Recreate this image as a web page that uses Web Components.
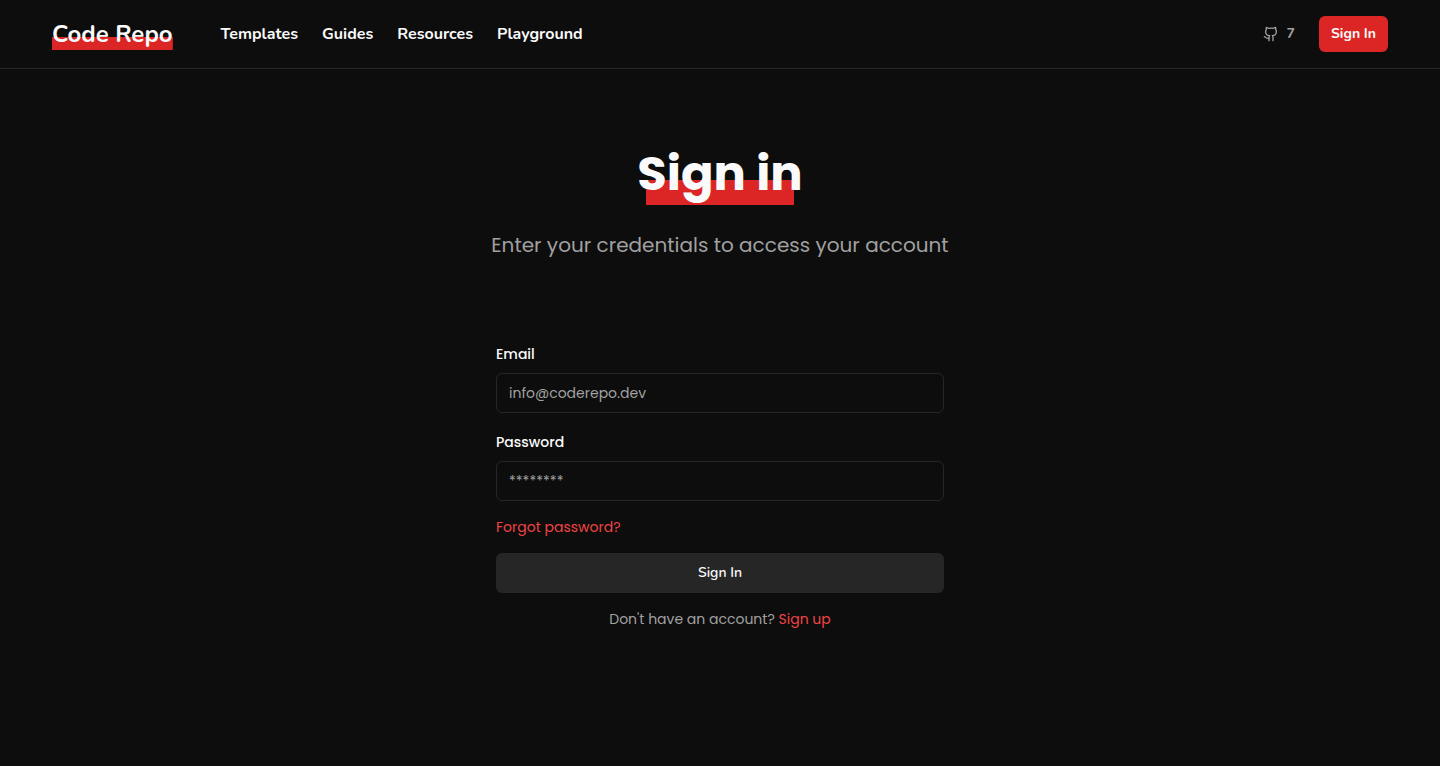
<!DOCTYPE html>
<html lang="en">
<head>
<meta charset="utf-8">
<meta name="viewport" content="width=device-width, initial-scale=1">
<title>Sign in - Code Repo</title>
<style>
  :root {
    --background: #0d0d0d;
    --foreground: #fafafa;
    --muted: #a1a1a1;
    --line: #262626;
    --red: #dc2626;
    --red-text: #ef4444;
    --brand-font: Nunito, "Open Sans", sans-serif;
    --body-font: Poppins, Inter, sans-serif;
  }
  body {
    margin: 0;
    background: var(--background);
    color: var(--foreground);
    font: 14px/20px var(--body-font);
  }
</style>
</head>
<body>
<sign-in-page></sign-in-page>

<script>
class BaseElement extends HTMLElement {
  constructor() {
    super();
    this.attachShadow({ mode: "open" }).innerHTML = this.render();
  }
}

customElements.define("site-logo", class extends BaseElement {
  render() {
    return `
      <style>
        :host { display: block; }
        a {
          display: block;
          font: 700 24px/32px var(--brand-font);
          color: inherit;
          text-decoration: none;
          white-space: nowrap;
          background: linear-gradient(var(--red), var(--red)) bottom / 100% 13px no-repeat;
        }
      </style>
      <a href="#"><slot></slot></a>`;
  }
});

customElements.define("nav-link", class extends BaseElement {
  render() {
    return `
      <style>
        :host { display: block; }
        a {
          display: block;
          font: 700 16px/24px var(--brand-font);
          color: inherit;
          text-decoration: none;
        }
      </style>
      <a href="#"><slot></slot></a>`;
  }
});

customElements.define("star-count", class extends BaseElement {
  render() {
    return `
      <style>
        :host { display: block; }
        a {
          display: flex;
          align-items: center;
          gap: 8px;
          color: var(--muted);
          font: 700 14px/20px var(--brand-font);
          text-decoration: none;
        }
        svg { display: block; width: 16px; height: 16px; }
      </style>
      <a href="#" aria-label="GitHub stars">
        <svg viewBox="0 0 24 24" fill="none" stroke="currentColor" stroke-width="2" stroke-linecap="round" stroke-linejoin="round" aria-hidden="true">
          <path d="M15 22v-4a4.8 4.8 0 0 0-1-3.5c3 0 6-2 6-5.5.08-1.25-.27-2.48-1-3.5.28-1.15.28-2.35 0-3.5 0 0-1 0-3 1.5-2.64-.5-5.36-.5-8 0C6 2 5 2 5 2c-.3 1.15-.3 2.35 0 3.5A5.403 5.403 0 0 0 4 9c0 3.5 3 5.5 6 5.5-.39.49-.68 1.05-.85 1.65-.17.6-.22 1.23-.15 1.85v4"/>
          <path d="M9 18c-4.51 2-5-2-7-2"/>
        </svg>
        <slot></slot>
      </a>`;
  }
});

customElements.define("site-header", class extends BaseElement {
  render() {
    return `
      <style>
        :host { display: block; border-bottom: 1px solid var(--line); }
        header {
          display: flex;
          align-items: center;
          max-width: 1336px;
          margin: 0 auto;
          padding: 16px 24px;
        }
        nav { display: flex; gap: 24px; margin-left: 48px; }
        .actions { display: flex; align-items: center; gap: 24px; margin-left: auto; }
        button {
          height: 36px;
          padding: 0 12px;
          border: 0;
          border-radius: 6px;
          background: var(--red);
          color: var(--foreground);
          font: 700 14px/20px var(--brand-font);
          cursor: pointer;
        }
      </style>
      <header>
        <site-logo>Code Repo</site-logo>
        <nav>
          <nav-link>Templates</nav-link>
          <nav-link>Guides</nav-link>
          <nav-link>Resources</nav-link>
          <nav-link>Playground</nav-link>
        </nav>
        <div class="actions">
          <star-count>7</star-count>
          <button type="button">Sign In</button>
        </div>
      </header>`;
  }
});

customElements.define("page-heading", class extends BaseElement {
  render() {
    return `
      <style>
        :host { display: flex; flex-direction: column; align-items: center; gap: 24px; text-align: center; }
        h1 {
          margin: 0;
          padding-bottom: 2px;
          font: 700 48px/58px var(--body-font);
          background: linear-gradient(var(--red), var(--red)) bottom / 148px 25px no-repeat;
        }
        p { margin: 0; font-size: 20px; line-height: 32px; color: var(--muted); }
      </style>
      <h1><slot name="title"></slot></h1>
      <p><slot></slot></p>`;
  }
});

customElements.define("text-field", class extends BaseElement {
  render() {
    return `
      <style>
        :host { display: grid; gap: 9px; }
        label { font-weight: 500; line-height: 20px; }
        input {
          box-sizing: border-box;
          width: 100%;
          height: 40px;
          padding: 0 12px;
          border: 1px solid var(--line);
          border-radius: 6px;
          background: transparent;
          color: var(--foreground);
          font: 14px/20px var(--body-font);
        }
        input::placeholder { color: var(--muted); opacity: 1; }
      </style>
      <label for="field">${this.getAttribute("label")}</label>
      <input id="field" type="${this.getAttribute("type")}" placeholder="${this.getAttribute("placeholder")}">`;
  }
});

customElements.define("sign-in-form", class extends BaseElement {
  render() {
    return `
      <style>
        :host { display: block; width: 100%; max-width: 448px; }
        form { display: grid; gap: 16px; }
        .fields { display: grid; gap: 19px; }
        a { color: var(--red-text); text-decoration: none; }
        .forgot { justify-self: start; }
        button {
          height: 40px;
          border: 0;
          border-radius: 6px;
          background: var(--line);
          color: var(--foreground);
          font: 600 14px/20px var(--brand-font);
          cursor: pointer;
        }
        p { margin: 0; text-align: center; color: var(--muted); }
      </style>
      <form>
        <div class="fields">
          <text-field label="Email" type="email" placeholder="info@coderepo.dev"></text-field>
          <text-field label="Password" type="password" placeholder="********"></text-field>
        </div>
        <a class="forgot" href="#">Forgot password?</a>
        <button type="submit">Sign In</button>
        <p>Don't have an account? <a href="#">Sign up</a></p>
      </form>`;
  }
});

customElements.define("sign-in-page", class extends BaseElement {
  render() {
    return `
      <style>
        :host { display: block; }
        main {
          display: flex;
          flex-direction: column;
          align-items: center;
          gap: 83px;
          padding: 76px 24px;
        }
      </style>
      <site-header></site-header>
      <main>
        <page-heading><span slot="title">Sign in</span>Enter your credentials to access your account</page-heading>
        <sign-in-form></sign-in-form>
      </main>`;
  }
});
</script>
</body>
</html>
